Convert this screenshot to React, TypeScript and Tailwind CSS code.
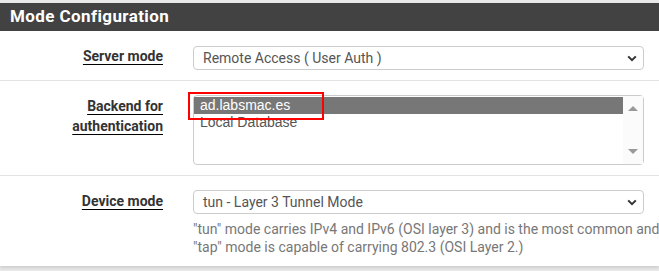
import React from "react";

const FONT = { fontFamily: "Roboto, 'Liberation Sans', sans-serif" };

function Chevron() {
  return (
    <svg width="10" height="7" viewBox="0 0 10 7" className="shrink-0">
      <path d="M1.2 1.4 L5 5.2 L8.8 1.4" fill="none" stroke="#333" strokeWidth="2" />
    </svg>
  );
}

function Select({ value }: { value: string }) {
  return (
    <div className="w-[451px] h-[24px] border border-[#ccc] rounded-[4px] bg-white flex items-center justify-between pl-[9px] pr-[6px] text-[14px] text-[#555]">
      <span>{value}</span>
      <Chevron />
    </div>
  );
}

function Label({ children }: { children: React.ReactNode }) {
  return (
    <div className="w-[163px] shrink-0 text-right text-[14px] font-bold text-[#333] leading-[20px]">
      {children}
    </div>
  );
}

export default function App() {
  return (
    <div className="w-[659px] h-[271px] overflow-hidden bg-[#e9e9e9] pt-[3px]" style={FONT}>
      <div className="bg-white shadow-[0_2px_3px_rgba(0,0,0,0.12)]">
        <div className="h-[28px] bg-[#424242] pl-[10px] flex items-center text-[17px] tracking-[0.4px] font-bold text-white">
          Mode Configuration
        </div>

        {/* Server mode */}
        <div className="flex gap-[30px] pt-[15px] pb-[10px] border-b border-[#e3e3e3]">
          <Label>
            <span className="underline underline-offset-[3px] decoration-black">Server mode</span>
          </Label>
          <Select value="Remote Access ( User Auth )" />
        </div>

        {/* Backend */}
        <div className="flex gap-[30px] pt-[14px] pb-[10px] border-b border-[#e3e3e3]">
          <div className="w-[163px] shrink-0 text-right text-[14px] font-bold text-[#333] leading-[20px] pt-[1px]">
            <div><span className="underline underline-offset-[3px] decoration-black">Backend for</span></div>
            <div><span className="underline underline-offset-[3px] decoration-black">authentication</span></div>
          </div>
          <div className="relative w-[451px] h-[70px] border border-[#ccc] rounded-[4px] bg-white flex overflow-visible">
            <div className="flex-1 pt-[1px] text-[14px] leading-[17px]" style={{ fontFamily: "'Liberation Sans', Arial, sans-serif" }}>
              <div className="bg-[#777] text-white pl-[6px]">ad.labsmac.es</div>
              <div className="text-[#555] pl-[6px]">Local Database</div>
            </div>
            <div className="w-[20px] bg-[#fbfbfb] flex flex-col items-center justify-between py-[10px]">
              <div className="w-0 h-0 border-l-[5px] border-r-[5px] border-b-[5px] border-l-transparent border-r-transparent border-b-[#999]" />
              <div className="w-0 h-0 border-l-[5px] border-r-[5px] border-t-[5px] border-l-transparent border-r-transparent border-t-[#999]" />
            </div>
            <div className="absolute left-[-6px] top-[-4px] w-[136px] h-[28px] border-2 border-[#f00]" />
          </div>
        </div>

        {/* Device mode */}
        <div className="flex gap-[30px] pt-[14px] pb-[10px]">
          <div className="w-[163px] shrink-0 text-right text-[14px] font-bold text-[#333] leading-[20px] pt-[1px]">
            <span className="underline underline-offset-[3px] decoration-black">Device mode</span>
          </div>
          <div className="shrink-0">
            <Select value="tun - Layer 3 Tunnel Mode" />
            <div className="mt-[6px] text-[14px] leading-[18px] text-[#777] whitespace-nowrap">
              <div>"tun" mode carries IPv4 and IPv6 (OSI layer 3) and is the most common and</div>
              <div>"tap" mode is capable of carrying 802.3 (OSI Layer 2.)</div>
            </div>
          </div>
        </div>
      </div>
    </div>
  );
}
